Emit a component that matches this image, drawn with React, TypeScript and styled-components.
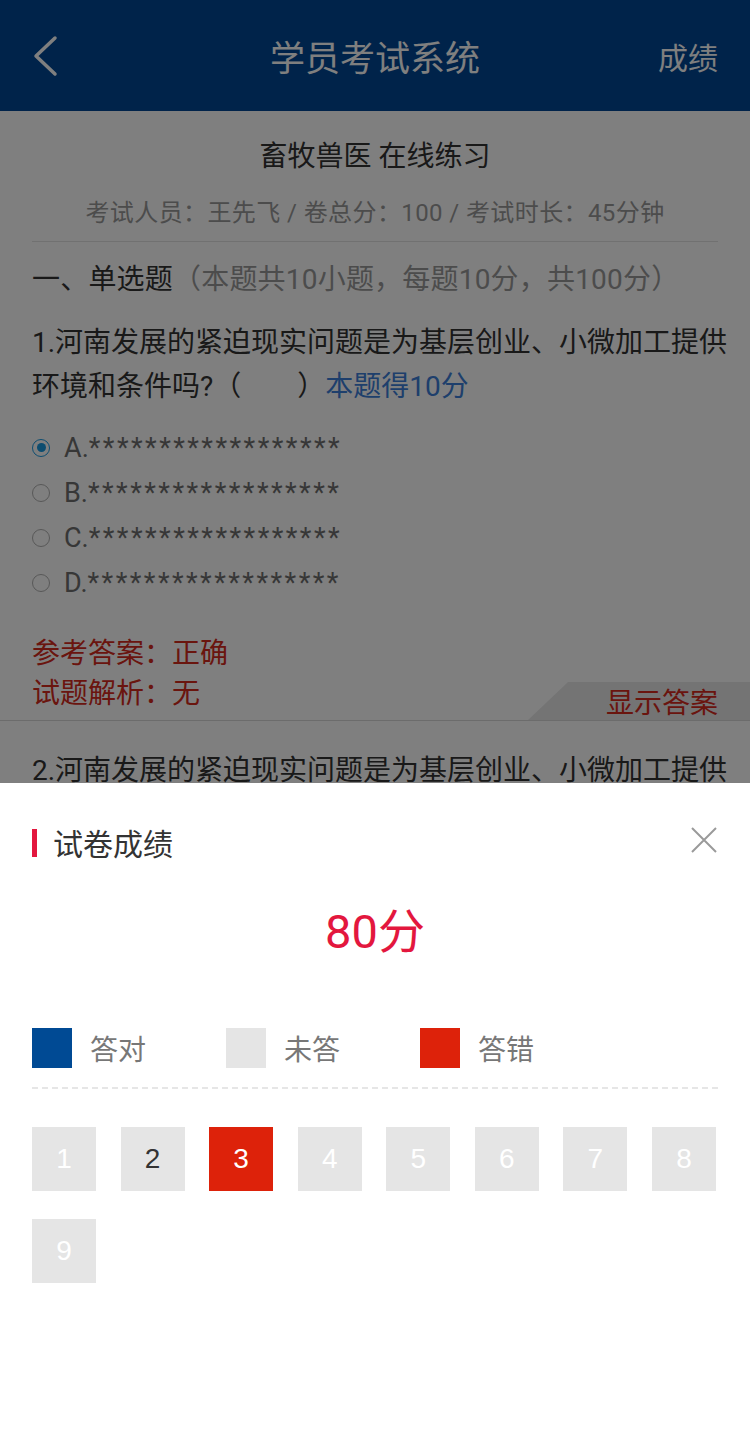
import React from "react";
import styled, { createGlobalStyle } from "styled-components";

const GlobalStyle = createGlobalStyle`
  html, body { margin: 0; padding: 0; background: #fff; }
  body { font-family: Roboto, "Noto Sans CJK SC", sans-serif; }
  * { box-sizing: border-box; }
`;

const Page = styled.div`
  position: relative;
  width: 750px;
  height: 1439px;
  overflow: hidden;
  background: #fff;
`;

const Header = styled.header`
  height: 111px;
  background: #004694;
  display: grid;
  grid-template-columns: 120px 1fr 120px;
  align-items: center;
  padding: 0 32px;
  color: #fff;
`;

const BackBtn = styled.div`
  display: flex;
  align-items: center;
  height: 111px;
`;

const HeaderTitle = styled.h1`
  margin: 0;
  text-align: center;
  font-size: 35px;
  font-weight: 400;
`;

const HeaderAction = styled.div`
  text-align: right;
  font-size: 30px;
`;

const Content = styled.main`
  padding-top: 26px;
`;

const Inner = styled.div`
  padding: 0 32px;
`;

const ExamTitle = styled.div`
  text-align: center;
  font-size: 28px;
  line-height: 40px;
  color: #333;
`;

const ExamInfo = styled.div`
  margin-top: 19px;
  text-align: center;
  font-size: 24px;
  letter-spacing: 0.4px;
  line-height: 34px;
  color: #999;
  padding-bottom: 11px;
  border-bottom: 1px solid #e3e3e3;
  white-space: nowrap;
`;

const SectionHead = styled.div`
  margin-top: 18px;
  font-size: 28px;
  letter-spacing: 0.2px;
  line-height: 40px;
  color: #333;
  white-space: nowrap;
`;

const Muted = styled.span`
  color: #999;
`;

const QuestionCard = styled.section`
  position: relative;
  padding-bottom: 6px;
  border-bottom: 1px solid #d8d8d8;
`;

const QuestionText = styled.div<{ $top: number }>`
  margin-top: ${(p) => p.$top}px;
  font-size: 28px;
  line-height: 44px;
  color: #333;
`;

const QuestionLine = styled.div`
  white-space: nowrap;
`;

const ScoreLink = styled.span`
  color: #3c7ed8;
`;

const Options = styled.div`
  margin-top: 16px;
  display: flex;
  flex-direction: column;
`;

const Option = styled.label`
  display: flex;
  align-items: center;
  height: 45px;
  font-size: 27px;
  color: #6e6e6e;
`;

const Radio = styled.span<{ $checked?: boolean }>`
  width: 18px;
  height: 18px;
  border-radius: 50%;
  border: 1.5px solid ${(p) => (p.$checked ? "#1b9ae0" : "#b0b0b0")};
  margin-right: 14px;
  display: flex;
  align-items: center;
  justify-content: center;
  &::after {
    content: "";
    width: 9px;
    height: 9px;
    border-radius: 50%;
    background: ${(p) => (p.$checked ? "#1b9ae0" : "transparent")};
  }
`;

const Stars = styled.span`
  letter-spacing: 2.45px;
`;

const Answer = styled.div<{ $top?: number }>`
  margin-top: ${(p) => p.$top ?? 0}px;
  font-size: 28px;
  line-height: 40px;
  color: #d42a1c;
`;

const ShowAnswerTab = styled.div`
  position: absolute;
  right: 0;
  bottom: 0;
  width: 222px;
  height: 38px;
  background: #e9e9e9;
  clip-path: polygon(40px 0, 100% 0, 100% 100%, 0 100%);
  display: flex;
  align-items: center;
  justify-content: flex-end;
  padding-right: 32px;
  font-size: 28px;
  color: #d42a1c;
`;

const Overlay = styled.div`
  position: absolute;
  inset: 0;
  background: rgba(0, 0, 0, 0.5);
`;

const Sheet = styled.div`
  position: absolute;
  left: 0;
  right: 0;
  top: 783px;
  bottom: 0;
  background: #fff;
  padding: 40px 32px 0;
`;

const SheetHead = styled.div`
  display: flex;
  align-items: center;
  justify-content: space-between;
  height: 40px;
`;

const SheetTitle = styled.div`
  display: flex;
  align-items: center;
  font-size: 30px;
  color: #333;
  margin-top: -3px;
  &::before {
    content: "";
    width: 5px;
    height: 28px;
    background: #e3173e;
    margin-right: 16px;
    margin-top: 3px;
  }
`;

const CloseBtn = styled.div`
  width: 26px;
  height: 26px;
  margin-right: 1px;
  margin-top: -6px;
`;

const BigScore = styled.div`
  margin-top: 39px;
  text-align: center;
  font-size: 47px;
  line-height: 60px;
  color: #e3173e;
`;

const Legend = styled.div`
  margin-top: 66px;
  display: grid;
  grid-template-columns: 194px 194px 194px;
  padding-bottom: 19px;
  border-bottom: 2px dashed #e6e6e6;
`;

const LegendItem = styled.div`
  display: flex;
  align-items: center;
  height: 40px;
  font-size: 28px;
  color: #777;
`;

const Swatch = styled.span<{ $color: string }>`
  width: 40px;
  height: 40px;
  background: ${(p) => p.$color};
  margin-right: 18px;
`;

const NumGrid = styled.div`
  margin-top: 38px;
  display: grid;
  grid-template-columns: repeat(8, 64px);
  justify-content: space-between;
  row-gap: 28px;
  width: 684px;
`;

type BoxState = "none" | "right" | "wrong" | "plain";

const NumBox = styled.div<{ $state: BoxState }>`
  width: 64px;
  height: 64px;
  display: flex;
  align-items: center;
  justify-content: center;
  font-family: "Liberation Sans", Arial, sans-serif;
  font-size: 28px;
  background: ${(p) => (p.$state === "wrong" ? "#dd220a" : "#e5e5e5")};
  color: ${(p) => (p.$state === "plain" ? "#333" : "#fff")};
`;

const stars = "******************";

const boxes: { n: number; s: BoxState }[] = [
  { n: 1, s: "none" },
  { n: 2, s: "plain" },
  { n: 3, s: "wrong" },
  { n: 4, s: "none" },
  { n: 5, s: "none" },
  { n: 6, s: "none" },
  { n: 7, s: "none" },
  { n: 8, s: "none" },
  { n: 9, s: "none" },
];

export default function App() {
  return (
    <Page>
      <GlobalStyle />
      <Header>
        <BackBtn>
          <svg width="30" height="44" viewBox="0 0 30 44">
            <polyline
              points="23,4 4,22 23,40"
              fill="none"
              stroke="#fff"
              strokeWidth="3.5"
              strokeLinecap="round"
              strokeLinejoin="round"
            />
          </svg>
        </BackBtn>
        <HeaderTitle>学员考试系统</HeaderTitle>
        <HeaderAction>成绩</HeaderAction>
      </Header>
      <Content>
        <Inner>
          <ExamTitle>畜牧兽医 在线练习</ExamTitle>
          <ExamInfo>考试人员：王先飞 / 卷总分：100 / 考试时长：45分钟</ExamInfo>
          <SectionHead>
            一、单选题<Muted>（本题共10小题，每题10分，共100分）</Muted>
          </SectionHead>
        </Inner>
        <QuestionCard>
          <Inner>
            <QuestionText $top={21}>
              <QuestionLine>1.河南发展的紧迫现实问题是为基层创业、小微加工提供</QuestionLine>
              <QuestionLine>
                环境和条件吗?（　　）<ScoreLink>本题得10分</ScoreLink>
              </QuestionLine>
            </QuestionText>
            <Options>
              {["A", "B", "C", "D"].map((l, i) => (
                <Option key={l}>
                  <Radio $checked={i === 0} />
                  {l}.<Stars>{stars}</Stars>
                </Option>
              ))}
            </Options>
            <Answer $top={29}>参考答案：正确</Answer>
            <Answer>试题解析：无</Answer>
          </Inner>
          <ShowAnswerTab>显示答案</ShowAnswerTab>
        </QuestionCard>
        <Inner>
          <QuestionText $top={28}>
            <QuestionLine>2.河南发展的紧迫现实问题是为基层创业、小微加工提供</QuestionLine>
          </QuestionText>
        </Inner>
      </Content>
      <Overlay />
      <Sheet>
        <SheetHead>
          <SheetTitle>试卷成绩</SheetTitle>
          <CloseBtn>
            <svg width="26" height="26" viewBox="0 0 26 26">
              <path d="M1 1 L25 25 M25 1 L1 25" stroke="#9a9a9a" strokeWidth="2" fill="none" />
            </svg>
          </CloseBtn>
        </SheetHead>
        <BigScore>80分</BigScore>
        <Legend>
          <LegendItem>
            <Swatch $color="#004a94" />
            答对
          </LegendItem>
          <LegendItem>
            <Swatch $color="#e5e5e5" />
            未答
          </LegendItem>
          <LegendItem>
            <Swatch $color="#dd220a" />
            答错
          </LegendItem>
        </Legend>
        <NumGrid>
          {boxes.map((b) => (
            <NumBox key={b.n} $state={b.s}>
              {b.n}
            </NumBox>
          ))}
        </NumGrid>
      </Sheet>
    </Page>
  );
}
